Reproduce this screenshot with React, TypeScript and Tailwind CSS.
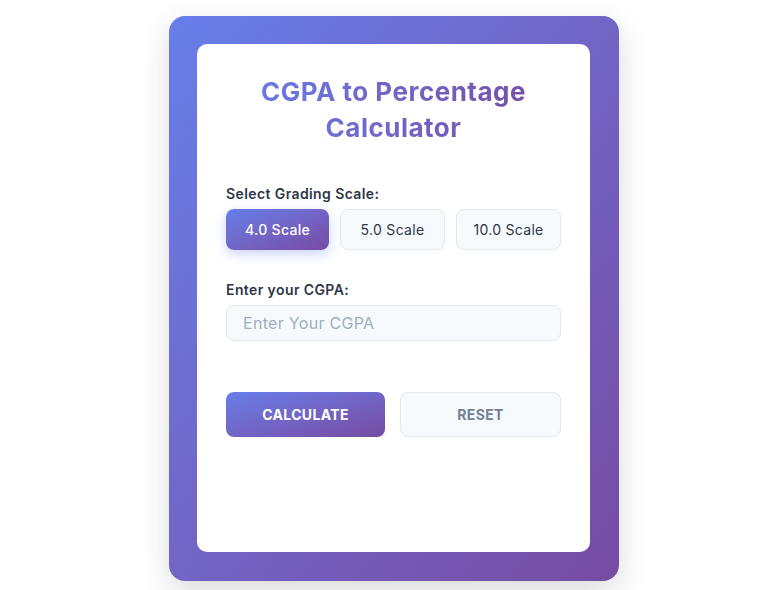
import { useState } from "react";

const scales = ["4.0 Scale", "5.0 Scale", "10.0 Scale"];

export default function App() {
  const [scale, setScale] = useState(0);
  const [cgpa, setCgpa] = useState("");

  return (
    <div
      className="flex min-h-[590px] justify-center bg-white pl-[15px] pt-4"
      style={{ fontFamily: "Inter, 'Noto Sans', sans-serif" }}
    >
      <div className="h-[565px] w-[450px] rounded-2xl bg-gradient-to-br from-[#667eea] to-[#764ba2] pb-[29px] pl-7 pr-[29px] pt-7 shadow-[0_10px_30px_rgba(0,0,0,0.15)]">
        <div className="h-full rounded-[10px] bg-white px-[29px] pt-[30px]">
          <h1 className="bg-gradient-to-r from-[#667eea] to-[#764ba2] bg-clip-text text-center text-[26px] font-bold leading-9 tracking-[0.5px] text-transparent">
            CGPA to Percentage
            <br />
            Calculator
          </h1>

          <div className="mt-[38px] text-sm font-semibold tracking-[0.4px] text-[#2d3748]">Select Grading Scale:</div>
          <div className="mt-[5px] flex gap-[11px]">
            {scales.map((s, i) => (
              <button
                key={s}
                onClick={() => setScale(i)}
                className={
                  i === scale
                    ? "h-[41px] flex-1 rounded-lg bg-gradient-to-br from-[#667eea] to-[#764ba2] text-sm font-medium tracking-[0.3px] text-white shadow-[0_4px_12px_rgba(102,126,234,0.35)]"
                    : "h-[41px] flex-1 rounded-lg border border-[#e2e8f0] bg-[#f7fafc] text-sm tracking-[0.3px] text-[#2d3748]"
                }
              >
                {s}
              </button>
            ))}
          </div>

          <div className="mt-[30px] text-sm font-semibold tracking-[0.4px] text-[#2d3748]">Enter your CGPA:</div>
          <input
            value={cgpa}
            onChange={(e) => setCgpa(e.target.value)}
            placeholder="Enter Your CGPA"
            className="mt-[5px] h-9 w-full rounded-lg border border-[#e2e8f0] bg-[#f7fafc] px-4 text-base tracking-[0.3px] text-[#2d3748] outline-none placeholder:text-[#a0aec0]"
          />

          <div className="mt-[51px] flex gap-[15px]">
            <button className="h-[45px] flex-1 rounded-lg bg-gradient-to-br from-[#667eea] to-[#764ba2] text-sm font-bold uppercase tracking-wide text-white">
              Calculate
            </button>
            <button className="h-[45px] flex-1 rounded-lg border border-[#e2e8f0] bg-[#f7fafc] text-sm font-bold uppercase tracking-wide text-[#718096]">
              Reset
            </button>
          </div>
        </div>
      </div>
    </div>
  );
}
